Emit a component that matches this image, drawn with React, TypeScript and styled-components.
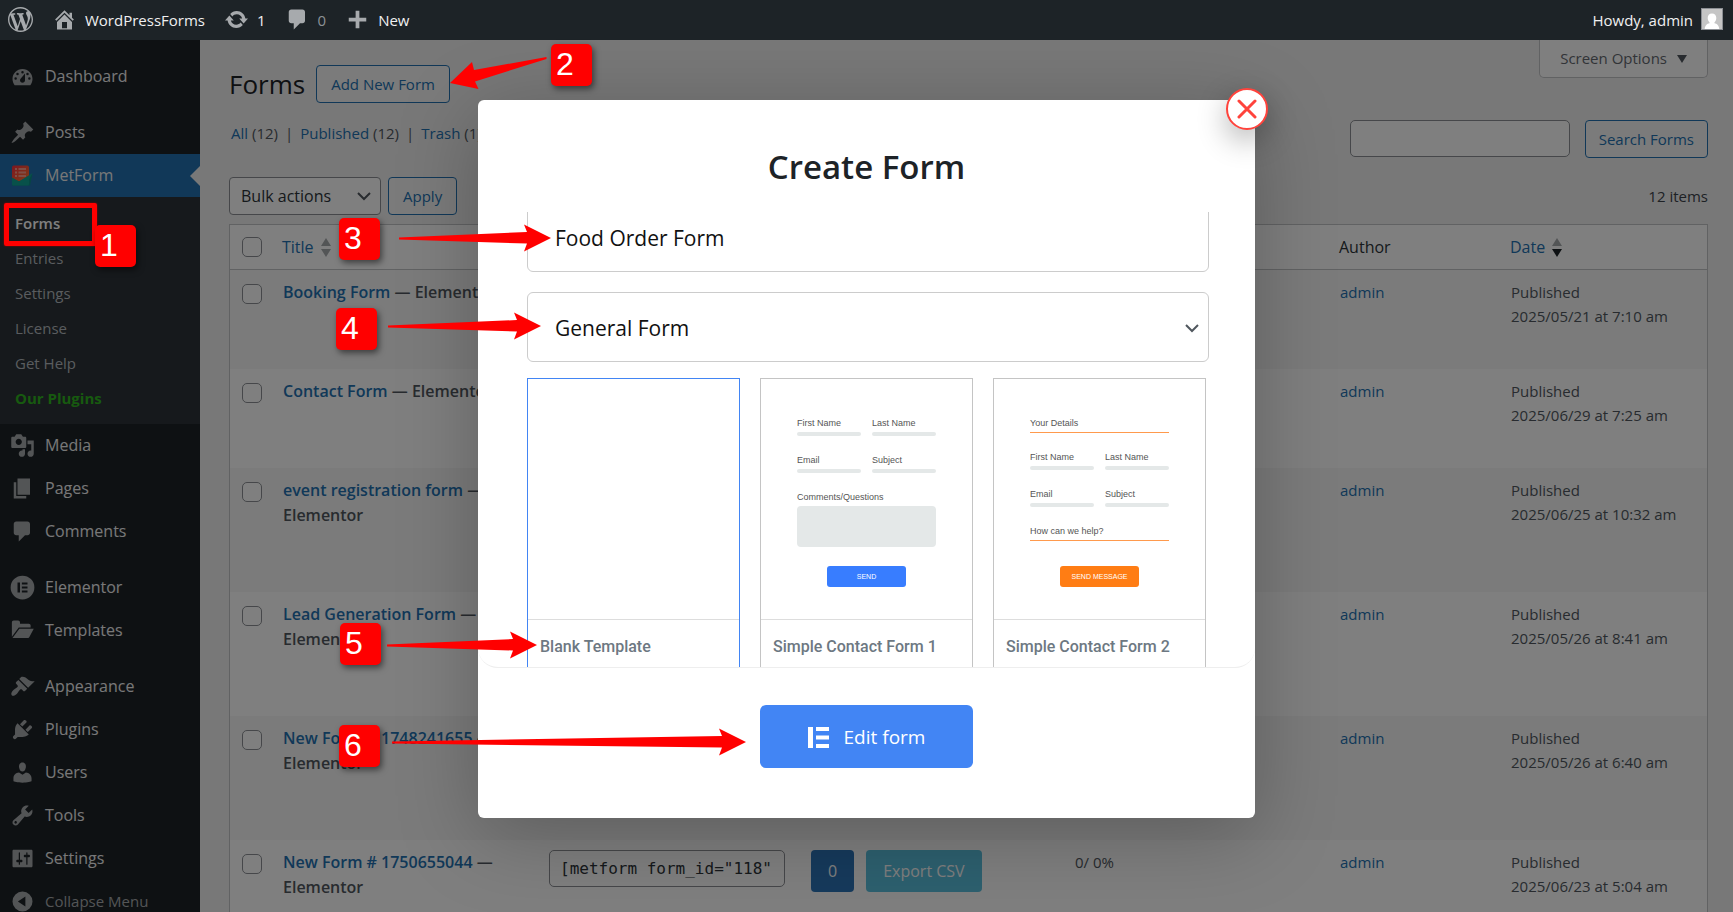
import React from "react";
import styled, { createGlobalStyle, css } from "styled-components";

const GlobalStyle = createGlobalStyle`
  *, *::before, *::after { box-sizing: border-box; }
  body {
    margin: 0;
    background: #f0f0f1;
    color: #3c434a;
    font: 400 15px/25px "Open Sans", "Noto Sans", sans-serif;
  }
  a { color: #2271b1; text-decoration: none; }
  button, input, select { font: inherit; margin: 0; }
`;

/* ---------- icons ---------- */

const paths = {
  wordpress:
    "M20 10c0-5.51-4.49-10-10-10C4.48 0 0 4.49 0 10c0 5.52 4.48 10 10 10 5.51 0 10-4.48 10-10zM7.78 15.37L4.37 6.22c.55-.02 1.17-.08 1.17-.08.5-.06.44-1.13-.06-1.11 0 0-1.45.11-2.37.11-.18 0-.37 0-.58-.01C4.12 2.69 6.87 1.11 10 1.11c2.33 0 4.45.87 6.05 2.34-.68-.11-1.65.39-1.65 1.58 0 .74.45 1.36.9 2.1.35.61.55 1.36.55 2.46 0 1.49-1.4 5-1.4 5l-3.03-8.37c.54-.02.82-.17.82-.17.5-.05.44-1.25-.06-1.22 0 0-1.44.12-2.38.12-.87 0-2.33-.12-2.33-.12-.5-.03-.56 1.2-.06 1.22l.92.08 1.26 3.41zM17.41 10c.24-.64.74-1.87.43-4.25.7 1.29 1.05 2.71 1.05 4.25 0 3.29-1.73 6.24-4.4 7.78.97-2.59 1.94-5.2 2.92-7.78zM6.1 18.09C3.12 16.65 1.11 13.53 1.11 10c0-1.3.23-2.48.72-3.59C3.25 10.3 4.67 14.2 6.1 18.09zm4.03-6.63l2.58 6.98c-.86.29-1.76.45-2.71.45-.79 0-1.57-.11-2.29-.33.81-2.38 1.62-4.74 2.42-7.1z",
  home: "M16 8.5l1.53 1.53-1.06 1.06L10 4.6l-6.47 6.49-1.06-1.06L10 2.5l4 4v-2h2v4zm-6-2.46l6 5.99V18H4v-5.97zM12 17v-5H8v5h4z",
  update:
    "M10.2 3.28c3.53 0 6.43 2.61 6.92 6h2.08l-3.5 4-3.5-4h2.32c-.45-1.97-2.21-3.45-4.32-3.45-1.45 0-2.73.71-3.54 1.78L4.95 5.66C6.23 4.2 8.11 3.28 10.2 3.28zm-.4 13.44c-3.52 0-6.43-2.61-6.92-6H.8l3.5-4c1.17 1.33 2.33 2.67 3.5 4H5.48c.45 1.97 2.21 3.45 4.32 3.45 1.45 0 2.73-.71 3.54-1.78l1.71 1.95c-1.28 1.46-3.15 2.38-5.25 2.38z",
  comments: "M5 2h9c1.1 0 2 .9 2 2v7c0 1.1-.9 2-2 2h-2l-5 5v-5H5c-1.1 0-2-.9-2-2V4c0-1.1.9-2 2-2z",
  plus: "M17 8.500v3h-5.500V17h-3v-5.500H3v-3h5.500V3h3v5.500z",
  dashboard:
    "M3.76 17h12.480c.9-1.170 1.760-3.130 1.760-5 0-4.420-3.580-8-8-8s-8 3.580-8 8c0 1.870.86 3.830 1.760 5zM10 5.500a1 1 0 110 2 1 1 0 010-2zM6 7a1 1 0 110 2 1 1 0 010-2zM14 7a1 1 0 110 2 1 1 0 010-2zM8.630 11.550L12 7.500v5.500c0 1.100-.9 2-2 2s-2-.9-2-2c0-.57.240-1.080.630-1.450zM4.500 10.500a1 1 0 110 2 1 1 0 010-2zM15.500 10.500a1 1 0 110 2 1 1 0 010-2z",
  post: "M10.44 3.02l1.82-1.82 6.36 6.35-1.83 1.82c-1.05-.68-2.48-.57-3.41.36l-.75.75c-.92.93-1.04 2.35-.35 3.41l-1.83 1.82-2.41-2.41-2.8 2.79c-.42.42-3.38 2.71-3.8 2.29s1.86-3.39 2.28-3.81l2.79-2.79L4.1 9.36l1.83-1.82c1.05.69 2.48.57 3.4-.36l.75-.75c.93-.92 1.05-2.35.36-3.41z",
  media:
    "M13 11V4c0-.55-.45-1-1-1h-1.670L9 1H5L3.670 3H2c-.55 0-1 .45-1 1v7c0 .55.45 1 1 1h10c.55 0 1-.45 1-1zM7 4.500c1.380 0 2.500 1.120 2.500 2.500S8.380 9.500 7 9.500 4.500 8.380 4.500 7 5.620 4.500 7 4.500zM14 6h5v10.500c0 1.380-1.120 2.500-2.500 2.500S14 17.880 14 16.500s1.120-2.500 2.500-2.500c.17 0 .34.02.5.05V9h-3V6zm-4 8.050V13h2v3.500c0 1.380-1.120 2.500-2.500 2.500S7 17.880 7 16.500 8.120 14 9.500 14c.17 0 .34.02.5.05z",
  page: "M6 15V2h10v13H6zm-1 1h8v2H3V5h2v11z",
  elementor: "M10 .5a9.500 9.500 0 100 19 9.500 9.500 0 000-19zM6 6h2v8H6zM9.500 6H14v1.600H9.500zM9.500 9.200H14v1.600H9.500zM9.500 12.400H14V14H9.500z",
  folder:
    "M1.500 15V3.500c0-.8.6-1.500 1.500-1.500h3.500c.8 0 1.500.7 1.500 1.500V4.500h7c.8 0 1.500.6 1.500 1.500v1.500H7L1.500 15zM7.500 8.500H19l-3.400 6.500c-.3.600-.8 1-1.500 1H2z",
  appearance:
    "M14.480 11.060L7.410 3.990l1.500-1.500c.5-.56 2.300-.47 3.510.32 1.210.8 1.430 1.280 2.910 2.100 1.180.64 2.450 1.260 4.450.85zm-.71.71L6.700 4.700 4.930 6.470c-.39.39-.39 1.020 0 1.410l1.060 1.060c.39.39.39 1.030 0 1.420-.6.6-1.430 1.110-2.210 1.690-.35.26-.7.53-1.010.84C1.430 14.230.4 16.080 1.400 17.070c.99 1 2.840-.03 4.180-1.360.31-.31.58-.66.85-1.020.57-.78 1.080-1.610 1.690-2.210.39-.39 1.020-.39 1.410 0l1.060 1.060c.39.39 1.020.39 1.410 0z",
  plugins:
    "M13.110 4.360L9.870 7.600 8 5.730l3.240-3.240c.35-.34 1.050-.2 1.560.32.52.51.66 1.210.31 1.550zm-8 1.770l.91-1.120 9.010 9.010-1.190.84c-.71.71-2.630 1.160-3.820 1.160H6.140L4.900 17.260c-.59.59-1.540.59-2.120 0-.59-.58-.59-1.530 0-2.120l1.240-1.240v-3.880c0-1.130.4-3.190 1.090-3.890zm7.260 3.970l3.240-3.240c.34-.35 1.040-.21 1.550.31.52.51.66 1.210.31 1.550l-3.240 3.250z",
  users:
    "M10 9.250c-2.270 0-2.730-3.440-2.730-3.440C7 4.020 7.820 2 9.970 2c2.160 0 2.980 2.020 2.710 3.810 0 0-.41 3.440-2.680 3.440zm0 2.570L12.720 10c2.390 0 4.520 2.330 4.520 4.530v2.490s-3.650 1.130-7.240 1.130c-3.650 0-7.240-1.130-7.240-1.130v-2.490c0-2.250 1.940-4.480 4.470-4.480z",
  tools:
    "M16.680 9.770c-1.340 1.340-3.300 1.670-4.950.99l-5.410 6.520c-.99.99-2.590.99-3.580 0s-.99-2.590 0-3.570l6.520-5.420c-.68-1.650-.35-3.610.99-4.950 1.280-1.280 3.120-1.620 4.720-1.060l-2.890 2.890 2.820 2.820 2.860-2.870c.53 1.580.18 3.390-1.080 4.650zM3.810 16.210c.4.39 1.040.39 1.430 0 .4-.4.4-1.040 0-1.430-.39-.4-1.030-.4-1.430 0-.39.39-.39 1.030 0 1.430z",
  settings:
    "M18 16V4c0-.55-.45-1-1-1H3c-.55 0-1 .45-1 1v12c0 .55.45 1 1 1h14c.55 0 1-.45 1-1zM8 11h1c.55 0 1 .45 1 1s-.45 1-1 1H8v1.500c0 .28-.22.5-.5.5s-.5-.22-.5-.5V13H6c-.55 0-1-.45-1-1s.45-1 1-1h1V5.500c0-.28.22-.5.5-.5s.5.22.5.5V11zm5-2h-1c-.55 0-1-.45-1-1s.45-1 1-1h1V5.500c0-.28.22-.5.5-.5s.5.22.5.5V7h1c.55 0 1 .45 1 1s-.45 1-1 1h-1v5.500c0 .28-.22.5-.5.5s-.5-.22-.5-.5V9z",
  collapse: "M10 2a8 8 0 100 16 8 8 0 000-16zM12.300 6v8L6.300 10z",
};

type IconName = keyof typeof paths;

const Glyph = styled.svg`
  flex: none;
  width: 25px;
  height: 25px;
  fill: #a7aaad;
  fill-rule: evenodd;
`;

const Icon = ({ name }: { name: IconName }) => (
  <Glyph viewBox="0 0 20 20" aria-hidden="true">
    <path d={paths[name]} />
  </Glyph>
);

const MetFormIcon = () => (
  <Glyph viewBox="0 0 25 25" aria-hidden="true">
    <defs>
      <linearGradient id="mf-paper" x1="0" y1="0" x2="1" y2="1">
        <stop offset="0" stopColor="#ff2d3f" />
        <stop offset="1" stopColor="#ff7a2e" />
      </linearGradient>
    </defs>
    <path d="M2 11l10 7 10.500-7-2.500 11.500H2z" fill="#0d8f86" />
    <path d="M3.500 2.500H17a2 2 0 012 2v9L9 18.500 2 15V4.500a2 2 0 011.500-2z" fill="url(#mf-paper)" />
    <path d="M2 14.500l7 4L22.500 10 19 16.500V21a1.500 1.500 0 01-1.500 1.500h-14A1.500 1.500 0 012 21z" fill="#10a295" />
    <path d="M5 5h2v2H5zM8.500 5H16v2H8.500zM5 8.500h2v2H5zM8.500 8.500H16v2H8.500zM5 12h2v2H5zM8.500 12H16v2H8.500z" fill="#ff9d8a" />
  </Glyph>
);

/* ---------- admin bar ---------- */

const AdminBar = styled.header`
  position: relative;
  z-index: 20;
  display: flex;
  align-items: center;
  justify-content: space-between;
  height: 40px;
  padding: 0 10px 2px 8px;
  background: #1d2327;
`;

const BarGroup = styled.nav`
  display: flex;
  align-items: center;
  gap: 19px;
`;

const BarLink = styled.a<{ $dim?: boolean }>`
  display: flex;
  align-items: center;
  gap: 8px;
  color: ${(p) => (p.$dim ? "#8c9196" : "#f0f0f1")};
  span { padding-top: 2px; }
`;

const Avatar = styled.svg`
  width: 22px;
  height: 22px;
  border: 1px solid #8c8f94;
  background: #c5c5c5;
`;

/* ---------- page frame ---------- */

const Page = styled.div`
  position: relative;
  height: 100vh;
  overflow: hidden;
`;

const Columns = styled.div`
  display: grid;
  grid-template-columns: 200px minmax(0, 1fr);
`;

const Sidebar = styled.nav`
  min-height: calc(100vh - 40px);
  padding-top: 15px;
  background: #1d2327;
`;

const MenuLink = styled.a<{ $active?: boolean; $small?: boolean }>`
  position: relative;
  display: flex;
  align-items: center;
  gap: 10px;
  height: 43px;
  padding-left: 10px;
  color: #f0f0f1;
  font-size: 16px;
  ${(p) => p.$small && css`color: #a7aaad; font-size: 15px;`}
  ${(p) =>
    p.$active &&
    css`
      background: #2271b1;
      &::after {
        content: "";
        position: absolute;
        right: 0;
        top: 12px;
        border: 10px solid transparent;
        border-left: 0;
        border-right-color: #f0f0f1;
      }
    `}
`;

const MenuGap = styled.div`
  height: 13px;
`;

const SubMenu = styled.div`
  display: grid;
  grid-auto-rows: 1fr;
  height: 227px;
  padding: 9px 0 8px 15px;
  background: #2c3338;
`;

const SubLink = styled.a<{ $tone?: "current" | "promo" }>`
  display: flex;
  align-items: center;
  color: #b4b9be;
  ${(p) => p.$tone === "current" && css`color: #fff; font-weight: 600;`}
  ${(p) => p.$tone === "promo" && css`color: #2fb41f; font-weight: 700;`}
`;

/* ---------- forms list ---------- */

const Main = styled.main`
  padding: 0 25px 0 29px;
`;

const Heading = styled.div`
  display: flex;
  justify-content: space-between;
  align-items: flex-start;
`;

const TitleGroup = styled.div`
  display: flex;
  align-items: center;
  gap: 11px;
  padding-top: 25px;
`;

const PageTitle = styled.h1`
  margin: 0;
  color: #1d2327;
  font-size: 26px;
  font-weight: 400;
  line-height: 38px;
`;

const OutlineButton = styled.button<{ $snug?: boolean }>`
  height: 38px;
  padding: 0 ${(p) => (p.$snug ? 13 : 14)}px;
  border: 1px solid #2271b1;
  border-radius: 4px;
  background: #f6f7f7;
  color: #2271b1;
`;

const ScreenOptions = styled.button`
  display: flex;
  align-items: center;
  gap: 10px;
  height: 38px;
  padding: 0 20px;
  border: 1px solid #c3c4c7;
  border-top: 0;
  border-radius: 0 0 5px 5px;
  background: #fff;
  color: #646970;
  svg { width: 10px; height: 8px; fill: #50575e; }
`;

const FilterRow = styled.div`
  display: flex;
  justify-content: space-between;
  align-items: flex-start;
  margin-top: 17px;
`;

const Filters = styled.ul`
  display: flex;
  gap: 7px;
  margin: 0;
  padding: 0 0 0 2px;
  list-style: none;
  color: #50575e;
  line-height: 26px;
  white-space: nowrap;
  li + li::before { content: "|"; margin-right: 7px; }
`;

const Search = styled.form`
  display: flex;
  gap: 15px;
`;

const SearchBox = styled.input`
  width: 220px;
  height: 37px;
  border: 1px solid #8c8f94;
  border-radius: 5px;
  background: #fff;
`;

const TableNav = styled.div`
  display: flex;
  align-items: center;
  gap: 7px;
  margin: 19px 0 9px;
`;

const SelectWrap = styled.div`
  position: relative;
  svg {
    position: absolute;
    right: 10px;
    top: 15px;
    width: 14px;
    height: 9px;
    fill: none;
    stroke: #50575e;
    stroke-width: 2;
    pointer-events: none;
  }
`;

const BulkSelect = styled.select`
  appearance: none;
  width: 152px;
  height: 38px;
  padding: 0 11px;
  border: 1px solid #8c8f94;
  border-radius: 4px;
  background: #fff;
  color: #2c3338;
  font-size: 16px;
`;

const ItemCount = styled.span`
  margin-left: auto;
`;

const Table = styled.table`
  width: 100%;
  table-layout: fixed;
  border: 1px solid #c3c4c7;
  border-spacing: 0;
  background: #fff;
`;

const Col = styled.col<{ $w?: number }>`
  ${(p) => p.$w && css`width: ${p.$w}px;`}
`;

const HeadCell = styled.th`
  height: 45px;
  padding: 0 10px;
  border-bottom: 1px solid #c3c4c7;
  color: #2c3338;
  font-size: 16px;
  font-weight: 400;
  text-align: left;
  a { display: flex; align-items: center; gap: 7px; }
`;

const SortMark = styled.svg<{ $down?: boolean }>`
  width: 10px;
  height: 19px;
  fill: #a7aaad;
  path:last-child { fill: ${(p) => (p.$down ? "#1d2327" : "#a7aaad")}; }
`;

const Row = styled.tr<{ $tall?: boolean }>`
  height: ${(p) => (p.$tall ? 124 : 99)}px;
  &:nth-child(odd) { background: #f6f7f7; }
`;

const Cell = styled.td`
  padding: 10px 11px;
  vertical-align: top;
  color: #50575e;
  line-height: 24px;
`;

const CheckCell = styled.td`
  padding: 14px 12px;
  vertical-align: top;
`;

const Check = styled.input`
  display: block;
  appearance: none;
  width: 20px;
  height: 20px;
  border: 1px solid #8c8f94;
  border-radius: 5px;
  background: #fff;
`;

const CheckHead = styled(HeadCell)`
  padding: 0 12px;
`;

const FormName = styled.strong`
  display: block;
  font-size: 16px;
  font-weight: 600;
  line-height: 25px;
`;

const Shortcode = styled.input`
  width: 236px;
  height: 37px;
  padding: 0 10px;
  border: 1px solid #8c8f94;
  border-radius: 5px;
  background: #fff;
  color: #2c3338;
  font: 16px "DejaVu Sans Mono", monospace;
`;

const Entries = styled.div`
  display: flex;
  gap: 12px;
`;

const Pill = styled.a<{ $tone: "blue" | "teal" }>`
  padding: 0 17px;
  border-radius: 4px;
  background: ${(p) => (p.$tone === "blue" ? "#2c74b8" : "#5bc0de")};
  color: #fff;
  font-size: 16px;
  line-height: 42px;
`;

/* ---------- dialog ---------- */

const Overlay = styled.div`
  position: absolute;
  inset: 40px 0 0;
  z-index: 10;
  display: flex;
  justify-content: center;
  align-items: flex-start;
  padding-top: 60px;
  background: rgba(0, 0, 0, 0.5);
`;

const Dialog = styled.section`
  position: relative;
  width: 777px;
  max-width: 100%;
  padding-bottom: 50px;
  border-radius: 6px;
  background: #fff;
  box-shadow: 0 16px 80px rgba(0, 0, 0, 0.25);
`;

const DialogTitle = styled.h2`
  margin: 0;
  padding: 42px 0 20px;
  color: #1d2327;
  font-size: 33px;
  font-weight: 600;
  line-height: 50px;
  text-align: center;
`;

const CloseButton = styled.button`
  position: absolute;
  top: -12px;
  right: -13px;
  display: grid;
  place-items: center;
  width: 42px;
  height: 42px;
  padding: 0;
  border: 2px solid #ff433c;
  border-radius: 50%;
  background: #fff;
  box-shadow: 0 10px 30px rgba(0, 0, 0, 0.3);
  svg { width: 20px; height: 20px; stroke: #ff433c; stroke-width: 3; stroke-linecap: round; }
`;

const DialogBody = styled.div`
  height: 456px;
  padding: 0 46px 0 49px;
  overflow: hidden;
  border-bottom: 1px solid #eee;
  border-radius: 0 0 20px 20px;
`;

const Fields = styled.div`
  display: grid;
  gap: 20px;
  margin-top: -10px;
  font-size: 21px;
`;

const fieldBox = css`
  width: 100%;
  height: 70px;
  padding: 2px 27px 0;
  border: 1px solid #ccc;
  border-radius: 6px;
  background: #fff;
  color: #111;
`;

const NameInput = styled.input`
  ${fieldBox}
`;

const TypeWrap = styled(SelectWrap)`
  font-size: 21px;
  svg { top: 32px; }
`;

const TypeSelect = styled.select`
  ${fieldBox}
  appearance: none;
  display: block;
`;

const Cards = styled.div`
  display: grid;
  grid-template-columns: repeat(3, 213px);
  gap: 20px;
  margin-top: 16px;
`;

const Card = styled.button<{ $selected?: boolean }>`
  display: flex;
  flex-direction: column;
  height: 320px;
  padding: 0;
  border: 1px solid ${(p) => (p.$selected ? "#4285f4" : "#c4c4c4")};
  background: #fff;
  text-align: left;
`;

const Preview = styled.span`
  display: flex;
  flex-direction: column;
  width: 100%;
  height: 241px;
  padding: 38px 36px 32px;
  border-bottom: 1px solid #ddd;
  color: #555;
  font: 9px/12px "Liberation Sans", Arial, sans-serif;
`;

const PreviewPair = styled.span`
  display: grid;
  grid-template-columns: 64px 64px;
  justify-content: space-between;
`;

const PreviewField = styled.span<{ $bar: number; $accent?: boolean }>`
  display: block;
  margin-bottom: 18px;
  white-space: nowrap;
  &::after {
    content: "";
    display: block;
    height: ${(p) => p.$bar}px;
    margin-top: 3px;
    border-radius: ${(p) => (p.$accent ? 0 : p.$bar > 10 ? 4 : 2)}px;
    background: ${(p) => (p.$accent ? "#ff9a4d" : "#e4e8e8")};
  }
`;

const PreviewSubmit = styled.span<{ $color: string }>`
  align-self: center;
  width: 79px;
  margin-top: auto;
  border-radius: 3px;
  background: ${(p) => p.$color};
  color: #fff;
  font-size: 7px;
  line-height: 21px;
  text-align: center;
`;

const CardName = styled.span`
  padding: 0 12px;
  color: #6d7882;
  font: 500 16px/54px Roboto, sans-serif;
`;

const EditButton = styled.button`
  display: flex;
  align-items: center;
  justify-content: center;
  gap: 15px;
  width: 213px;
  height: 63px;
  margin: 37px auto 0;
  padding-top: 3px;
  border: 0;
  border-radius: 6px;
  background: #4285f4;
  color: #fff;
  font-size: 19px;
  svg { width: 21px; height: 21px; fill: #fff; }
`;

/* ---------- step annotations ---------- */

const Steps = styled.div`
  position: absolute;
  inset: 0;
  z-index: 30;
  pointer-events: none;
`;

const Frame = styled.div`
  position: absolute;
  left: 4px;
  top: 203px;
  width: 93px;
  height: 43px;
  border: 5px solid #f00;
  border-radius: 2px;
  box-shadow: 0 0 2px #a00;
`;

const Badge = styled.div<{ $x: number; $y: number }>`
  position: absolute;
  left: ${(p) => p.$x}px;
  top: ${(p) => p.$y}px;
  width: 41px;
  height: 42px;
  padding-left: 5px;
  border-radius: 5px;
  background: #f00;
  box-shadow: 2px 3px 6px rgba(0, 0, 0, 0.5);
  color: #fff;
  font: 32px/40px "Liberation Sans", Arial, sans-serif;
`;

const ArrowSvg = styled.svg<{ $x: number; $y: number }>`
  position: absolute;
  left: ${(p) => p.$x}px;
  top: ${(p) => p.$y}px;
  fill: #f00;
`;

/* A tapered shaft running right into a barbed head whose tip is at the box's right edge. */
const RightArrow = ({ x, y, length }: { x: number; y: number; length: number }) => {
  const n = length;
  return (
    <ArrowSvg $x={x} $y={y} width={n} height={28} aria-hidden="true">
      <path d={`M0 13.500L${n - 24} 8L${n - 27} 0.500L${n} 14L${n - 27} 27.500L${n - 24} 19.500L0 15.500z`} />
    </ArrowSvg>
  );
};

/* ---------- data ---------- */

const topItems: { icon: IconName; label: string; dim?: boolean }[] = [
  { icon: "home", label: "WordPressForms" },
  { icon: "update", label: "1" },
  { icon: "comments", label: "0", dim: true },
  { icon: "plus", label: "New" },
];

const menuGroups: { icon: IconName; label: string; small?: boolean }[][] = [
  [
    { icon: "media", label: "Media" },
    { icon: "page", label: "Pages" },
    { icon: "comments", label: "Comments" },
  ],
  [
    { icon: "elementor", label: "Elementor" },
    { icon: "folder", label: "Templates" },
  ],
  [
    { icon: "appearance", label: "Appearance" },
    { icon: "plugins", label: "Plugins" },
    { icon: "users", label: "Users" },
    { icon: "tools", label: "Tools" },
    { icon: "settings", label: "Settings" },
    { icon: "collapse", label: "Collapse Menu", small: true },
  ],
];

const forms = [
  { name: "Booking Form", id: 101, date: "2025/05/21 at 7:10 am" },
  { name: "Contact Form", id: 104, date: "2025/06/29 at 7:25 am" },
  { name: "event registration form", id: 107, date: "2025/06/25 at 10:32 am", tall: true },
  { name: "Lead Generation Form", id: 110, date: "2025/05/26 at 8:41 am", tall: true },
  { name: "New Form # 1748241655", id: 114, date: "2025/05/26 at 6:40 am", tall: true },
  { name: "New Form # 1750655044", id: 118, date: "2025/06/23 at 5:04 am", tall: true },
];

const badges = [
  { n: 1, x: 95, y: 225 },
  { n: 2, x: 551, y: 44 },
  { n: 3, x: 339, y: 218 },
  { n: 4, x: 336, y: 308 },
  { n: 5, x: 340, y: 623 },
  { n: 6, x: 339, y: 725 },
];

const Sort = ({ down }: { down?: boolean }) => (
  <SortMark $down={down} viewBox="0 0 10 19" aria-hidden="true">
    <path d="M0 8L5 0l5 8z" />
    <path d="M0 11h10l-5 8z" />
  </SortMark>
);

const Chevron = () => (
  <svg viewBox="0 0 14 9" aria-hidden="true">
    <path d="M1 1l6 6 6-6" />
  </svg>
);

export default function App() {
  return (
    <>
      <GlobalStyle />
      <Page>
        <AdminBar>
          <BarGroup aria-label="Toolbar">
            <BarLink href="#" aria-label="About WordPress">
              <Icon name="wordpress" />
            </BarLink>
            {topItems.map((t) => (
              <BarLink key={t.icon} href="#" $dim={t.dim}>
                <Icon name={t.icon} />
                <span>{t.label}</span>
              </BarLink>
            ))}
          </BarGroup>
          <BarLink href="#">
            <span>Howdy, admin</span>
            <Avatar viewBox="0 0 20 20" aria-hidden="true">
              <path d="M10 4.500c2.800 0 4.300 2 4.300 4.500 0 1.800-.8 3.300-1.800 4.200v1c2.500.6 4.500 2 4.800 5.800H2.700c.3-3.800 2.300-5.200 4.800-5.800v-1C6.500 12.300 5.700 10.800 5.700 9c0-2.500 1.500-4.500 4.300-4.500z" fill="#fff" />
            </Avatar>
          </BarLink>
        </AdminBar>

        <Columns>
          <Sidebar aria-label="Main menu">
            <MenuLink href="#"><Icon name="dashboard" />Dashboard</MenuLink>
            <MenuGap />
            <MenuLink href="#"><Icon name="post" />Posts</MenuLink>
            <MenuLink href="#" $active><MetFormIcon />MetForm</MenuLink>
            <SubMenu>
              <SubLink href="#" $tone="current">Forms</SubLink>
              <SubLink href="#">Entries</SubLink>
              <SubLink href="#">Settings</SubLink>
              <SubLink href="#">License</SubLink>
              <SubLink href="#">Get Help</SubLink>
              <SubLink href="#" $tone="promo">Our Plugins</SubLink>
            </SubMenu>
            {menuGroups.map((group, i) => (
              <React.Fragment key={i}>
                {i > 0 && <MenuGap />}
                {group.map((m) => (
                  <MenuLink key={m.label} href="#" $small={m.small}>
                    <Icon name={m.icon} />
                    {m.label}
                  </MenuLink>
                ))}
              </React.Fragment>
            ))}
          </Sidebar>

          <Main>
            <Heading>
              <TitleGroup>
                <PageTitle>Forms</PageTitle>
                <OutlineButton type="button">Add New Form</OutlineButton>
              </TitleGroup>
              <ScreenOptions type="button">
                Screen Options
                <svg viewBox="0 0 10 8" aria-hidden="true"><path d="M0 0h10L5 8z" /></svg>
              </ScreenOptions>
            </Heading>

            <FilterRow>
              <Filters>
                <li><a href="#">All</a> (12)</li>
                <li><a href="#">Published</a> (12)</li>
                <li><a href="#">Trash</a> (1)</li>
              </Filters>
              <Search>
                <SearchBox type="search" aria-label="Search forms" />
                <OutlineButton type="button" $snug>Search Forms</OutlineButton>
              </Search>
            </FilterRow>

            <TableNav>
              <SelectWrap>
                <BulkSelect aria-label="Bulk actions">
                  <option>Bulk actions</option>
                </BulkSelect>
                <Chevron />
              </SelectWrap>
              <OutlineButton type="button">Apply</OutlineButton>
              <ItemCount>12 items</ItemCount>
            </TableNav>

            <Table>
              <colgroup>
                <Col $w={42} />
                <Col />
                <Col $w={262} />
                <Col $w={264} />
                <Col $w={265} />
                <Col $w={171} />
                <Col $w={207} />
              </colgroup>
              <thead>
                <tr>
                  <CheckHead><Check type="checkbox" aria-label="Select all" /></CheckHead>
                  <HeadCell><a href="#">Title <Sort /></a></HeadCell>
                  <HeadCell>Shortcode</HeadCell>
                  <HeadCell>Entries</HeadCell>
                  <HeadCell>Views/ Conversion</HeadCell>
                  <HeadCell>Author</HeadCell>
                  <HeadCell><a href="#">Date <Sort down /></a></HeadCell>
                </tr>
              </thead>
              <tbody>
                {forms.map((f) => (
                  <Row key={f.id} $tall={f.tall}>
                    <CheckCell><Check type="checkbox" aria-label={`Select ${f.name}`} /></CheckCell>
                    <Cell><FormName><a href="#">{f.name}</a> — Elementor</FormName></Cell>
                    <Cell><Shortcode readOnly aria-label="Shortcode" value={`[metform form_id="${f.id}"]`} /></Cell>
                    <Cell>
                      <Entries>
                        <Pill href="#" $tone="blue">0</Pill>
                        <Pill href="#" $tone="teal">Export CSV</Pill>
                      </Entries>
                    </Cell>
                    <Cell>0/ 0%</Cell>
                    <Cell><a href="#">admin</a></Cell>
                    <Cell>Published<br />{f.date}</Cell>
                  </Row>
                ))}
              </tbody>
            </Table>
          </Main>
        </Columns>

        <Overlay>
          <Dialog role="dialog" aria-label="Create Form">
            <CloseButton type="button" aria-label="Close">
              <svg viewBox="0 0 20 20" aria-hidden="true"><path d="M2 2l16 16M18 2L2 18" /></svg>
            </CloseButton>
            <DialogTitle>Create Form</DialogTitle>
            <DialogBody>
              <Fields>
                <NameInput type="text" aria-label="Form name" defaultValue="Food Order Form" />
                <TypeWrap>
                  <TypeSelect aria-label="Form type">
                    <option>General Form</option>
                  </TypeSelect>
                  <Chevron />
                </TypeWrap>
              </Fields>
              <Cards>
                <Card type="button" $selected>
                  <Preview />
                  <CardName>Blank Template</CardName>
                </Card>
                <Card type="button">
                  <Preview>
                    <PreviewPair>
                      <PreviewField $bar={4}>First Name</PreviewField>
                      <PreviewField $bar={4}>Last Name</PreviewField>
                      <PreviewField $bar={4}>Email</PreviewField>
                      <PreviewField $bar={4}>Subject</PreviewField>
                    </PreviewPair>
                    <PreviewField $bar={41}>Comments/Questions</PreviewField>
                    <PreviewSubmit $color="#387dff">SEND</PreviewSubmit>
                  </Preview>
                  <CardName>Simple Contact Form 1</CardName>
                </Card>
                <Card type="button">
                  <Preview>
                    <PreviewField $bar={1} $accent>Your Details</PreviewField>
                    <PreviewPair>
                      <PreviewField $bar={4}>First Name</PreviewField>
                      <PreviewField $bar={4}>Last Name</PreviewField>
                      <PreviewField $bar={4}>Email</PreviewField>
                      <PreviewField $bar={4}>Subject</PreviewField>
                    </PreviewPair>
                    <PreviewField $bar={1} $accent>How can we help?</PreviewField>
                    <PreviewSubmit $color="#ff7d14">SEND MESSAGE</PreviewSubmit>
                  </Preview>
                  <CardName>Simple Contact Form 2</CardName>
                </Card>
              </Cards>
            </DialogBody>
            <EditButton type="button">
              <svg viewBox="0 0 21 21" aria-hidden="true">
                <path d="M0 0h5v21H0zM8 0h13v4H8zM8 8.500h13v4H8zM8 17h13v4H8z" />
              </svg>
              Edit form
            </EditButton>
          </Dialog>
        </Overlay>

        <Steps>
          <Frame />
          {badges.map((b) => (
            <Badge key={b.n} $x={b.x} $y={b.y}>{b.n}</Badge>
          ))}
          <ArrowSvg $x={450} $y={56} width={97} height={34} aria-hidden="true">
            <path d="M96.500 1L24 14L22 6L0 27L28.500 33L25 25.500L96.500 3z" />
          </ArrowSvg>
          <RightArrow x={399} y={224} length={152} />
          <RightArrow x={388} y={312} length={153} />
          <RightArrow x={387} y={631} length={150} />
          <RightArrow x={392} y={728} length={354} />
        </Steps>
      </Page>
    </>
  );
}
